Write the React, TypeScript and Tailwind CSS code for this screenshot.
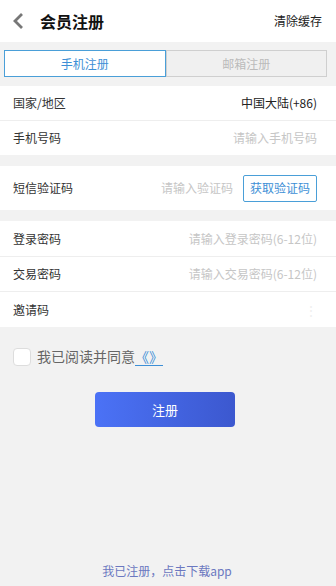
import { useState } from "react";

export default function App() {
  const [tab, setTab] = useState<"phone" | "email">("phone");
  const [agree, setAgree] = useState(false);

  return (
    <div
      className="min-h-[586px] bg-[#f2f2f2] flex flex-col text-[#333]"
      style={{ fontFamily: '"Noto Sans CJK SC", "Noto Sans", sans-serif' }}>
      {/* Header */}
      <div className="h-[42px] bg-white flex items-center justify-between pl-[12px] pr-[14px]">
        <div className="flex items-center">
          <svg width="14" height="18" viewBox="0 0 14 18" className="text-[#777]">
            <path
              d="M10 2 L3 9 L10 16"
              fill="none"
              stroke="currentColor"
              strokeWidth="2.8"
            />
          </svg>
          <span className="ml-[14px] text-[16px] font-bold text-[#111]">会员注册</span>
        </div>
        <span className="text-[12px] text-[#222]">清除缓存</span>
      </div>

      {/* Tabs */}
      <div className="pl-[4px] pr-[9px] py-[8px] flex">
        <button
          onClick={() => setTab("phone")}
          className={`flex-1 h-[27px] text-[12px] border ${
            tab === "phone"
              ? "bg-white border-[#4a9fd8] text-[#3d8fd6]"
              : "bg-[#f0f0f0] border-[#cfcfcf] text-[#bbb]"
          }`}>
          手机注册
        </button>
        <button
          onClick={() => setTab("email")}
          className={`flex-1 h-[27px] text-[12px] border ${
            tab === "email"
              ? "bg-white border-[#4a9fd8] text-[#3d8fd6]"
              : "bg-[#f0f0f0] border-[#cfcfcf] text-[#bbb]"
          }`}>
          邮箱注册
        </button>
      </div>

      {/* Section 1 */}
      <div className="bg-white mt-[1px] divide-y divide-[#eee]">
        <div className="h-[35px] flex items-center justify-between pl-[13px] pr-[19px] text-[12px]">
          <span>国家/地区</span>
          <span className="text-[#222]">中国大陆(+86)</span>
        </div>
        <div className="h-[34px] flex items-center justify-between pl-[13px] pr-[19px] text-[12px]">
          <span>手机号码</span>
          <span className="text-[#c6c6c6]">请输入手机号码</span>
        </div>
      </div>

      {/* SMS code */}
      <div className="bg-white mt-[11px] h-[44px] flex items-center justify-between pl-[13px] pr-[19px] text-[12px]">
        <span>短信验证码</span>
        <div className="flex items-center">
          <span className="text-[#c6c6c6]">请输入验证码</span>
          <button className="ml-[10px] h-[27px] w-[74px] border border-[#4a9fd8] rounded-[2px] text-[#3d8fd6] bg-white">
            获取验证码
          </button>
        </div>
      </div>

      {/* Passwords */}
      <div className="bg-white mt-[11px] divide-y divide-[#eee]">
        <div className="h-[36px] flex items-center justify-between pl-[13px] pr-[19px] text-[12px]">
          <span>登录密码</span>
          <span className="text-[#c6c6c6]">请输入登录密码(6-12位)</span>
        </div>
        <div className="h-[35px] flex items-center justify-between pl-[13px] pr-[19px] text-[12px]">
          <span>交易密码</span>
          <span className="text-[#c6c6c6]">请输入交易密码(6-12位)</span>
        </div>
        <div className="h-[35px] flex items-center justify-between pl-[13px] pr-[19px] text-[12px]">
          <span>邀请码</span>
          <span className="text-[#eee]">⋮</span>
        </div>
      </div>

      {/* Agreement */}
      <label className="mt-[19px] ml-[13px] flex items-center cursor-pointer">
        <span
          onClick={() => setAgree(!agree)}
          className={`w-[18px] h-[18px] rounded-[4px] border border-[#ddd] ${
            agree ? "bg-[#4a6ef5]" : "bg-white"
          }`}
        />
        <span className="ml-[6px] text-[14px] text-[#666]">我已阅读并同意</span>
        <span className="text-[14px] text-[#3d8fd6] underline underline-offset-[3px]">
          《》
        </span>
      </label>

      {/* Submit */}
      <div className="mt-[25px] flex justify-center pr-[6px]">
        <button className="w-[140px] h-[35px] rounded-[4px] bg-gradient-to-r from-[#4b72f6] to-[#3c58cf] text-white text-[13px]">
          注册
        </button>
      </div>

      <div className="flex-1" />
      <div className="pb-[6px] pr-[2px] text-center text-[12px] text-[#6b78c0]">
        我已注册，点击下载app
      </div>
    </div>
  );
}
